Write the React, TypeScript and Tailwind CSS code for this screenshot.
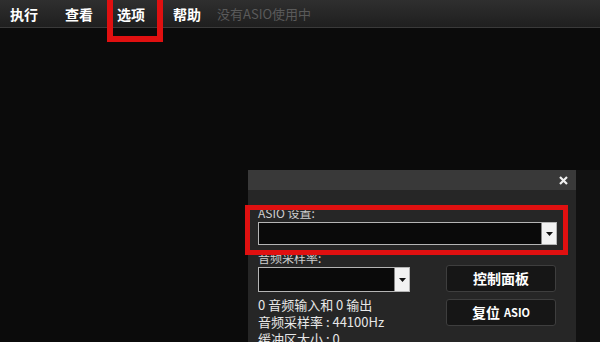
import React from "react";

const font = { fontFamily: '"Noto Sans CJK SC", "Liberation Sans", sans-serif' };

function Arrow() {
  return (
    <div className="w-[15px] self-stretch bg-[#f2f2f2] flex items-center justify-center border-l border-[#888]">
      <svg width="7" height="4" viewBox="0 0 7 4"><path d="M0 0H7L3.5 4Z" fill="#111" /></svg>
    </div>
  );
}

export default function App() {
  return (
    <div className="w-[600px] h-[342px] bg-[#0b0b0b] overflow-hidden relative flex flex-col" style={font}>
      {/* Menu bar */}
      <div className="h-[28px] shrink-0 bg-gradient-to-b from-[#2f2f2f] to-[#1f1f1f] border-b border-[#3a3a3a] flex items-center text-[14px] font-bold text-white leading-none">
        <span className="ml-[10px]">执行</span>
        <span className="ml-[27px]">查看</span>
        <span className="ml-[24px]">选项</span>
        <span className="ml-[28px]">帮助</span>
        <span className="ml-[16px] text-[13px] font-normal text-[#5a5a5a]">没有ASIO使用中</span>
      </div>
      <div className="absolute left-[107px] top-0 w-[56px] h-[42px] border-[6px] border-t-0 border-[#e01010]" />

      {/* Dialog */}
      <div className="flex-1 flex min-h-0">
        <div className="w-[248px] shrink-0" />
        <div className="mt-[142px] w-[328px] shrink-0 flex flex-col bg-[#262626]">
          <div className="h-[20px] shrink-0 bg-[#393939] flex items-center justify-end pr-[8px]">
            <svg width="9" height="9" viewBox="0 0 9 9"><path d="M1 1L8 8M8 1L1 8" stroke="#eee" strokeWidth="2.2" /></svg>
          </div>
          <div className="pl-[10px] pr-[19px] pt-[16px] flex flex-col">
            <div className="text-[12px] leading-[13px] text-[#cfcfcf]">ASIO 设置:</div>
            <div className="mt-[3px] h-[23px] shrink-0 bg-[#0a0a0a] border border-[#b5b5b5] flex">
              <div className="flex-1" />
              <Arrow />
            </div>
            <div className="mt-[6px] text-[12px] leading-[13px] text-[#cfcfcf]">音频采样率:</div>
            <div className="mt-[3px] flex gap-[36px]">
              <div className="w-[152px] flex flex-col">
                <div className="h-[25px] shrink-0 bg-[#0a0a0a] border border-[#b5b5b5] flex">
                  <div className="flex-1" />
                  <Arrow />
                </div>
                <div className="mt-[4px] text-[13px] leading-[17px] text-[#e8e8e8]">
                  <div className="h-[17px]">0 音频输入和 0 输出</div>
                  <div className="h-[17px]">音频采样率 : 44100Hz</div>
                  <div className="h-[17px]">缓冲区大小 : 0</div>
                </div>
              </div>
              <div className="w-[110px] -mt-[2px] flex flex-col gap-[7px]">
                <div className="h-[27px] bg-[#161616] border border-[#3e3e3e] rounded-[3px] flex items-center justify-center text-[14px] font-bold text-white">控制面板</div>
                <div className="h-[27px] bg-[#161616] border border-[#3e3e3e] rounded-[3px] flex items-center justify-center text-[14px] font-bold text-white">复位 <span className="ml-[4px] text-[11px]">ASIO</span></div>
              </div>
            </div>
          </div>
        </div>
        <div className="mt-[142px] flex-1 bg-[#111111]" />
      </div>
      <div className="absolute left-[245px] top-[205px] w-[323px] h-[50px] border-[5px] border-[#e01010]" />
    </div>
  );
}
